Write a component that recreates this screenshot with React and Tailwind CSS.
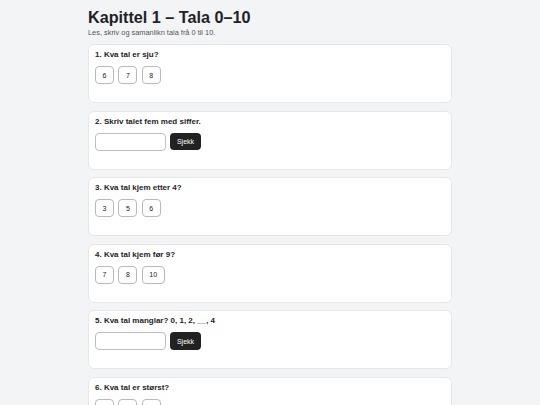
import React, { useState } from "react"

const questions = [
  { id: 1, text: "1. Kva tal er sju?", type: "choice", options: ["6", "7", "8"] },
  { id: 2, text: "2. Skriv talet fem med siffer.", type: "input" },
  { id: 3, text: "3. Kva tal kjem etter 4?", type: "choice", options: ["3", "5", "6"] },
  { id: 4, text: "4. Kva tal kjem før 9?", type: "choice", options: ["7", "8", "10"] },
  { id: 5, text: "5. Kva tal manglar? 0, 1, 2, __, 4", type: "input" },
  { id: 6, text: "6. Kva tal er størst?", type: "choice", options: ["3", "9", "6"] },
  { id: 7, text: "7. Skriv talet ti med siffer.", type: "input" },
]

const QuestionCard = ({ q }) => {
  const [value, setValue] = useState("")

  return (
    <div className="bg-white border border-[#e6e7ea] rounded-[6px] px-[6px] pt-[5px] pb-[18px]">
      <div className="text-[8px] leading-[10px] font-bold text-[#1f2228] mb-[6px]">{q.text}</div>
      {q.type === "choice" ? (
        <div className="flex gap-[4.5px]">
          {q.options.map((o) => (
            <button
              key={o}
              className="h-[18px] px-[6.5px] border border-[#b9b9b9] rounded-[4px] bg-white text-[7px] leading-none text-[#222]"
            >
              {o}
            </button>
          ))}
        </div>
      ) : (
        <div className="flex gap-[4px] items-center">
          <input
            value={value}
            onChange={(e) => setValue(e.target.value)}
            className="w-[71px] h-[18px] border border-[#bdbdbd] rounded-[4px] bg-white px-[4px] text-[7px] outline-none"
          />
          <button className="h-[17.5px] w-[31px] rounded-[4px] bg-[#222222] text-white text-[7px] leading-none">
            Sjekk
          </button>
        </div>
      )}
    </div>
  )
}

export default function App() {
  return (
    <div className="min-h-screen bg-[#f3f4f6] font-['Liberation_Sans',Arial,sans-serif]">
      <div className="mx-auto w-[364px] pt-[9px]">
        <h1 className="text-[16.2px] leading-[17px] font-bold text-[#1f2228]">Kapittel 1 – Tala 0–10</h1>
        <p className="text-[7.4px] leading-[9px] text-[#555] mt-[1.5px]">Les, skriv og samanlikn tala frå 0 til 10.</p>
        <div className="flex flex-col gap-[7.5px] mt-[7.5px]">
          {questions.map((q) => (
            <QuestionCard key={q.id} q={q} />
          ))}
        </div>
      </div>
    </div>
  )
}
